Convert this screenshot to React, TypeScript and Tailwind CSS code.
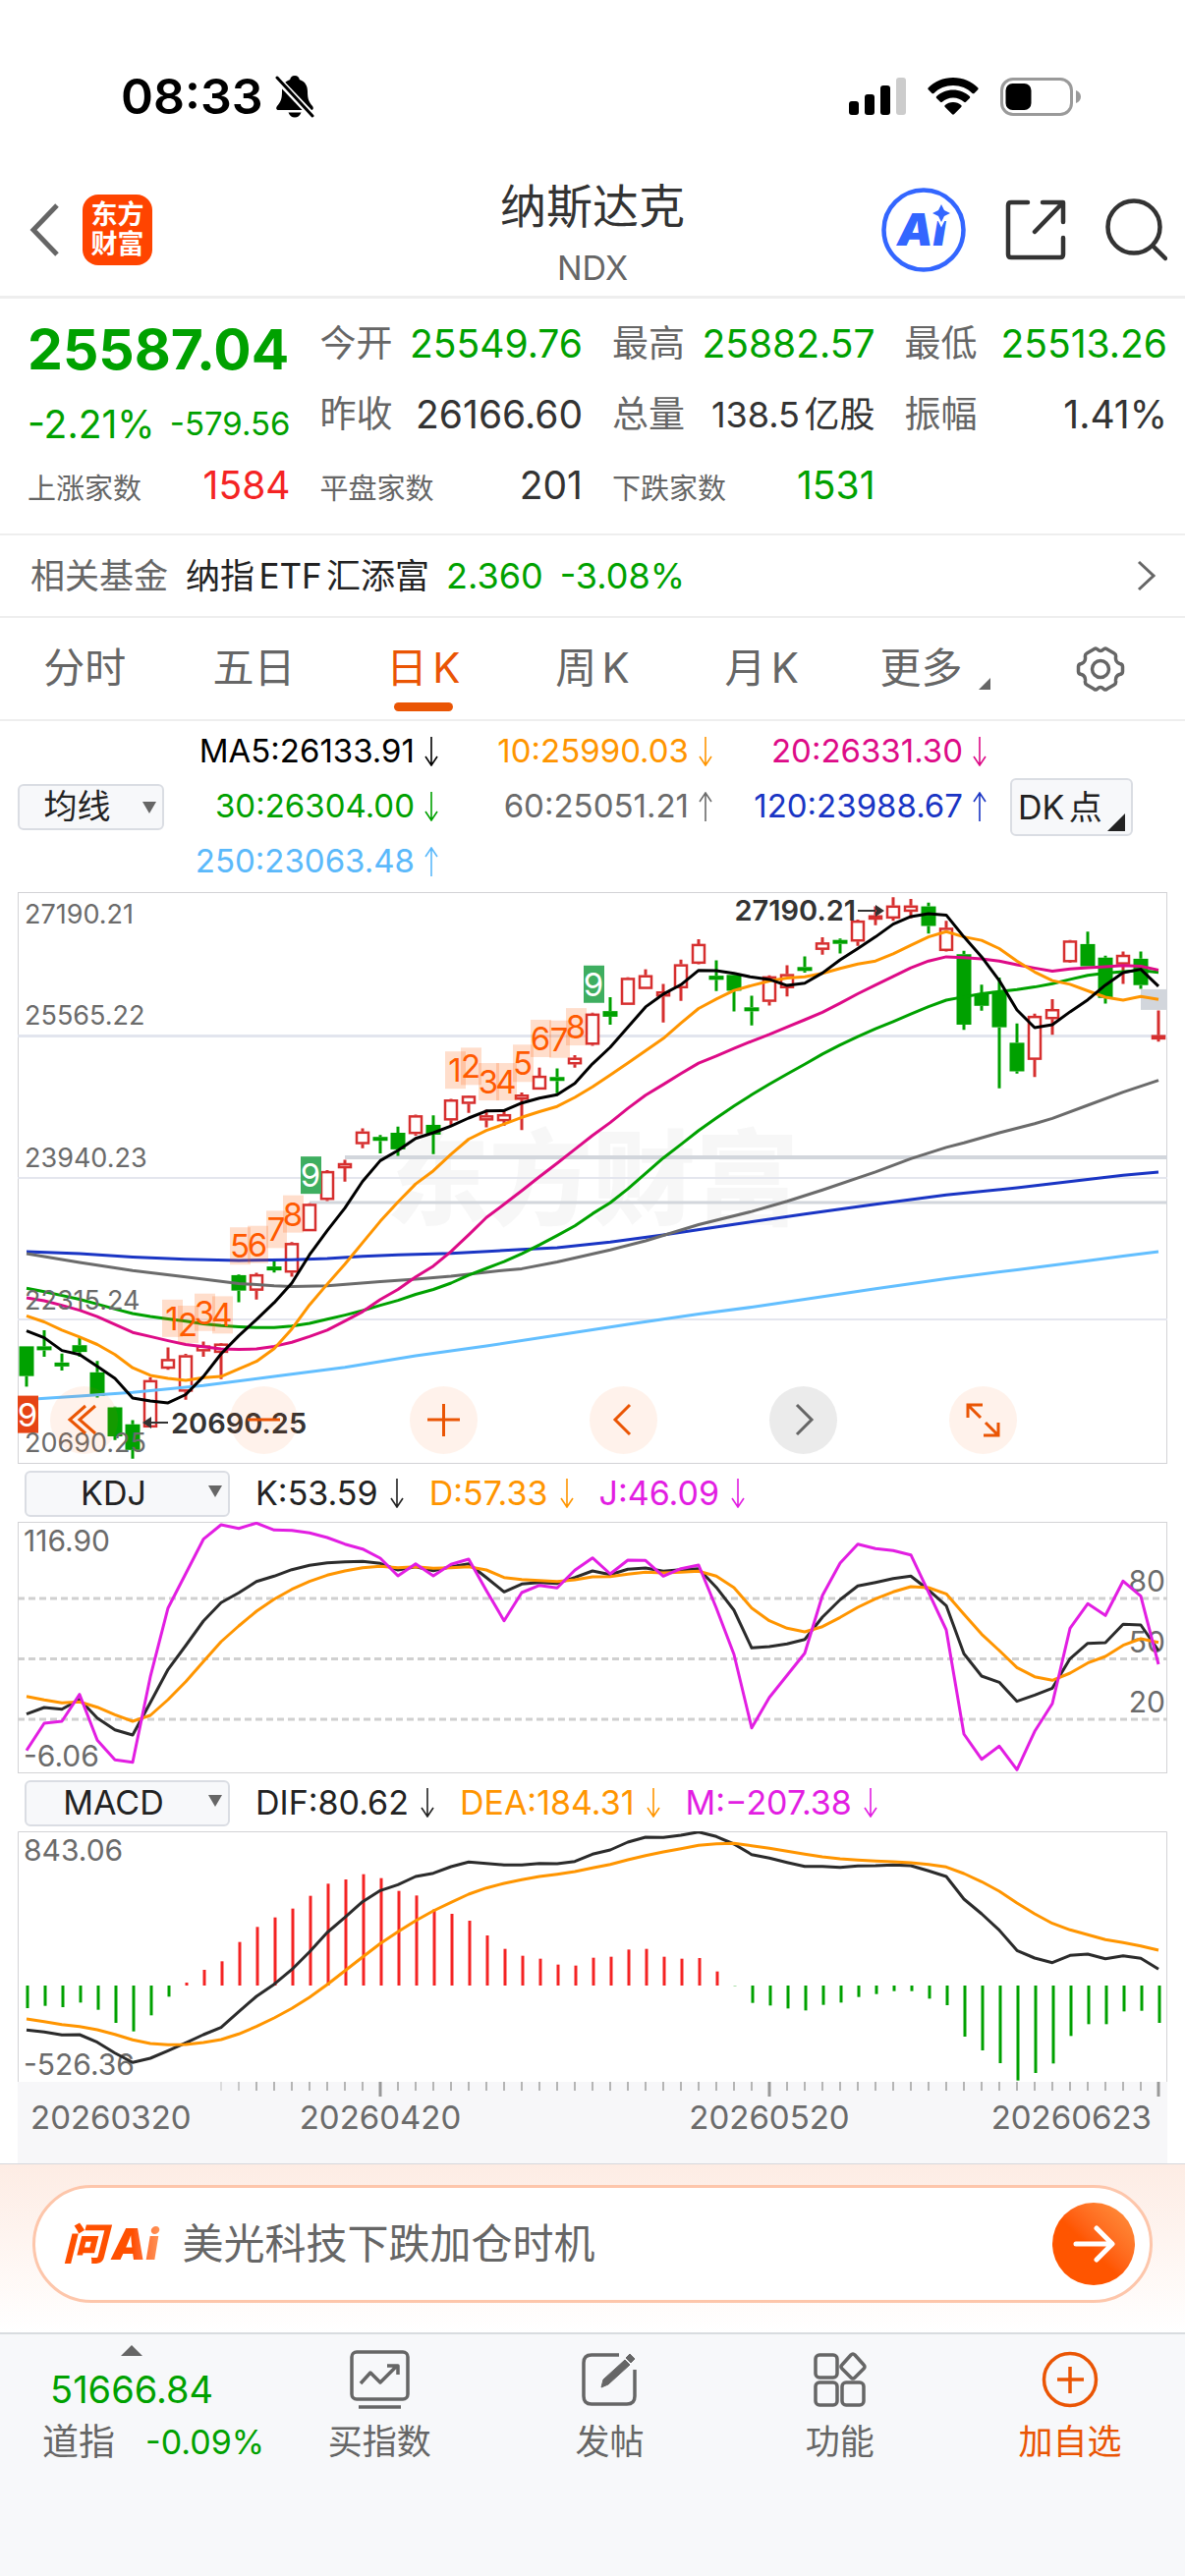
import { useState } from "react";
import type { ReactNode } from "react";

type Candle = ["u" | "d", number, number, number, number];
type Tone = "up" | "down" | "flat";

const TONES: Record<Tone, string> = {
  up: "text-[#f42323]",
  down: "text-[#00a100]",
  flat: "text-[#333333]",
};

const QUOTES: { label: string; value: string; tone: Tone; small?: boolean }[][] = [
  [
    { label: "今开", value: "25549.76", tone: "down" },
    { label: "最高", value: "25882.57", tone: "down" },
    { label: "最低", value: "25513.26", tone: "down" },
  ],
  [
    { label: "昨收", value: "26166.60", tone: "flat" },
    { label: "总量", value: "138.5亿股", tone: "flat", small: true },
    { label: "振幅", value: "1.41%", tone: "flat" },
  ],
];

const BREADTH: { label: string; value: string; tone: Tone }[] = [
  { label: "上涨家数", value: "1584", tone: "up" },
  { label: "平盘家数", value: "201", tone: "flat" },
  { label: "下跌家数", value: "1531", tone: "down" },
];

const TABS = ["分时", "五日", "日K", "周K", "月K"];

const AVERAGES = [
  { text: "MA5:26133.91", dir: "down", color: "text-black" },
  { text: "10:25990.03", dir: "down", color: "text-[#ff9500]" },
  { text: "20:26331.30", dir: "down", color: "text-[#dd0b87]" },
  { text: "30:26304.00", dir: "down", color: "text-[#00a100]" },
  { text: "60:25051.21", dir: "up", color: "text-[#6b6b6b]" },
  { text: "120:23988.67", dir: "up", color: "text-[#1a35c4]" },
  { text: "250:23063.48", dir: "up", color: "text-[#5bb9fb]" },
];

// Candle: direction, high, body top, body bottom, low. All levels count
// down from the price ceiling (22 = top edge of the chart, 1540 = bottom).
const CANDLES: Candle[] = [
  ["d", 1228, 1228, 1307, 1335], ["d", 1185, 1228, 1238, 1256], ["d", 1247, 1271, 1281, 1292],
  ["d", 1205, 1225, 1243, 1256], ["d", 1267, 1297, 1360, 1364], ["d", 1388, 1390, 1467, 1477],
  ["d", 1424, 1435, 1503, 1526], ["u", 1310, 1318, 1443, 1443], ["u", 1231, 1262, 1287, 1290],
  ["u", 1248, 1252, 1348, 1370], ["u", 1215, 1226, 1241, 1256], ["u", 1219, 1221, 1245, 1315],
  ["d", 1037, 1039, 1080, 1111], ["u", 1033, 1037, 1080, 1104], ["d", 996, 1016, 1026, 1032],
  ["u", 951, 954, 1032, 1043], ["u", 848, 850, 922, 922], ["u", 760, 763, 839, 842],
  ["u", 733, 742, 755, 791], ["u", 649, 658, 691, 702], ["d", 667, 672, 680, 716],
  ["d", 645, 661, 705, 722], ["u", 613, 615, 664, 669], ["d", 615, 640, 666, 718],
  ["u", 571, 573, 628, 640], ["u", 562, 563, 584, 608], ["u", 600, 615, 628, 647],
  ["u", 600, 612, 630, 643], ["u", 554, 560, 573, 654], ["u", 488, 510, 546, 546],
  ["d", 490, 513, 522, 556], ["u", 455, 462, 479, 488], ["u", 342, 345, 427, 430],
  ["d", 301, 338, 353, 374], ["u", 248, 250, 321, 321], ["u", 227, 243, 279, 279],
  ["u", 266, 286, 299, 368], ["u", 201, 214, 277, 311], ["u", 147, 160, 212, 214],
  ["d", 203, 244, 255, 285], ["d", 240, 242, 284, 339], ["d", 297, 328, 337, 376],
  ["u", 243, 246, 313, 323], ["u", 216, 240, 277, 299], ["d", 193, 221, 230, 236],
  ["u", 142, 156, 175, 188], ["d", 145, 149, 158, 185], ["u", 95, 98, 153, 165],
  ["u", 60, 84, 95, 110], ["u", 36, 58, 92, 98], ["u", 40, 58, 74, 92],
  ["d", 50, 60, 112, 132], ["u", 98, 117, 178, 180], ["d", 178, 187, 374, 388],
  ["d", 268, 293, 324, 337], ["d", 249, 285, 381, 543], ["d", 371, 422, 498, 504],
  ["u", 345, 351, 467, 513], ["u", 306, 333, 359, 401], ["u", 149, 151, 208, 210],
  ["d", 127, 160, 219, 219], ["d", 191, 196, 303, 318], ["u", 180, 189, 214, 266],
  ["d", 180, 199, 269, 279], ["u", 336, 402, 413, 419],
];

const MA5 = [
  1187, 1205, 1239, 1250, 1281, 1313, 1365, 1373, 1378, 1356, 1308, 1248, 1200, 1157, 1112, 1060, 985, 921, 861, 790,
  735, 708, 676, 661, 643, 622, 603, 602, 582, 569, 560, 530, 478, 434, 381, 327, 293, 268, 230, 231, 238, 248, 254,
  270, 264, 237, 202, 172, 141, 107, 87, 79, 83, 141, 194, 257, 335, 382, 374, 340, 308, 269, 236, 227, 272,
];
const MA10 = [
  1147, 1163, 1185, 1203, 1223, 1250, 1285, 1305, 1313, 1318, 1311, 1308, 1288, 1268, 1234, 1182, 1118, 1063, 1010,
  953, 896, 845, 797, 762, 718, 678, 655, 638, 620, 605, 591, 567, 539, 508, 476, 443, 411, 370, 331, 306, 283, 270,
  258, 250, 247, 238, 225, 213, 205, 186, 163, 141, 127, 141, 150, 172, 205, 234, 257, 267, 284, 301, 309, 299, 307,
];
const MA20 = [
  1099, 1107, 1119, 1132, 1149, 1170, 1191, 1202, 1213, 1223, 1229, 1235, 1236, 1235, 1228, 1217, 1202, 1185, 1161,
  1136, 1104, 1077, 1044, 1015, 976, 932, 886, 851, 815, 778, 742, 705, 668, 634, 596, 561, 533, 504, 476, 457, 437,
  418, 400, 380, 361, 341, 317, 292, 269, 246, 223, 205, 194, 196, 199, 205, 215, 224, 232, 226, 223, 220, 217, 219, 229,
];
const MA30 = [
  1074, 1083, 1093, 1103, 1116, 1129, 1141, 1149, 1155, 1161, 1168, 1173, 1176, 1178, 1178, 1174, 1167, 1156, 1145,
  1133, 1119, 1106, 1090, 1077, 1060, 1039, 1021, 1003, 982, 959, 934, 908, 876, 847, 810, 769, 728, 692, 655, 622,
  590, 560, 532, 505, 479, 452, 428, 406, 385, 366, 346, 326, 309, 300, 292, 286, 281, 274, 265, 254, 243, 237, 233,
  230, 235,
];
// The slow averages only need a point every few days.
const MA60: [number, number][] = [
  [0, 982], [3, 1005], [6, 1027], [9, 1044], [12, 1061], [14, 1067], [15, 1069], [17, 1067], [20, 1056], [22, 1050],
  [24, 1042], [27, 1026], [28, 1022], [30, 1004], [33, 972], [35, 948], [38, 905], [41, 870], [43, 843], [45, 813],
  [48, 765], [50, 730], [52, 700], [53, 688], [55, 661], [57, 637], [58, 623], [60, 588], [62, 553], [64, 522],
];
const MA120: [number, number][] = [
  [0, 977], [3, 982], [6, 991], [9, 997], [12, 1000], [15, 998], [17, 995], [19, 989], [21, 985], [24, 981], [28, 971],
  [30, 966], [33, 951], [36, 932], [40, 904], [44, 877], [48, 851], [52, 826], [56, 807], [60, 785], [62, 774], [64, 765],
];
const MA250: [number, number][] = [
  [0, 1369], [3, 1360], [6, 1350], [10, 1332], [14, 1308], [18, 1284], [22, 1253], [26, 1227], [30, 1198], [34, 1170],
  [38, 1142], [41, 1124], [44, 1103], [48, 1075], [52, 1048], [56, 1025], [60, 1001], [62, 988], [64, 977],
];

// TD sequential counts: left edge and level of the box top
const COUNTS: [string, number, number][] = [
  ["1", 147, 1104], ["2", 163, 1120], ["3", 180, 1088], ["4", 198, 1095], ["5", 216, 912], ["6", 234, 908],
  ["7", 253, 868], ["8", 270, 827], ["9", 288, 724],
  ["1", 435, 445], ["2", 451, 435], ["3", 469, 476], ["4", 487, 476], ["5", 504, 427], ["6", 522, 361],
  ["7", 541, 363], ["8", 558, 330], ["9", 576, 217],
];

const PRICE_LABELS: [string, number][] = [
  ["27190.21", 32], ["25565.22", 135], ["23940.23", 280], ["22315.24", 425], ["20690.25", 570],
];

const KDJ_K = [
  762, 742, 747, 717, 774, 810, 826, 727, 626, 553, 478, 422, 392, 357, 341, 321, 308, 300, 297, 296, 302, 322, 312,
  324, 312, 303, 345, 389, 365, 360, 363, 345, 325, 336, 320, 316, 326, 321, 318, 375, 445, 560, 556, 548, 534, 466,
  413, 371, 360, 348, 341, 383, 431, 578, 646, 665, 723, 704, 683, 593, 546, 544, 488, 490, 568,
];
const KDJ_D = [
  708, 719, 728, 725, 741, 764, 784, 766, 718, 663, 602, 541, 493, 448, 411, 381, 357, 338, 325, 315, 311, 315, 312,
  317, 315, 312, 322, 345, 351, 354, 357, 352, 343, 342, 335, 329, 331, 329, 326, 341, 376, 438, 477, 500, 511, 495,
  467, 436, 410, 389, 373, 376, 395, 457, 518, 568, 620, 648, 659, 637, 606, 586, 552, 532, 543,
];
const KDJ_J = [
  873, 790, 784, 702, 842, 902, 909, 648, 438, 333, 228, 184, 195, 179, 200, 201, 209, 223, 243, 258, 286, 340, 303,
  340, 305, 289, 385, 477, 391, 369, 377, 323, 285, 334, 292, 293, 341, 318, 307, 438, 580, 804, 711, 644, 576, 400,
  301, 243, 257, 263, 276, 390, 505, 823, 900, 860, 932, 815, 730, 500, 425, 461, 356, 402, 610,
];

const MACD_BARS = [
  700, 693, 697, 683, 705, 745, 771, 722, 665, 622, 583, 557, 498, 452, 423, 396, 357, 320, 307, 291, 303, 342, 356,
  398, 412, 433, 478, 519, 540, 549, 567, 570, 546, 543, 521, 519, 543, 549, 547, 588, 632, 684, 692, 701, 707, 690,
  683, 666, 657, 648, 648, 671, 691, 787, 829, 868, 921, 898, 869, 785, 749, 749, 710, 708, 745,
];
const MACD_DIF = [
  767, 773, 782, 781, 804, 837, 866, 853, 830, 806, 781, 759, 711, 664, 627, 582, 528, 469, 423, 375, 341, 323, 298,
  288, 268, 254, 258, 263, 263, 258, 259, 252, 230, 217, 193, 178, 179, 172, 162, 176, 199, 231, 242, 255, 267, 267,
  270, 266, 265, 263, 265, 281, 298, 367, 412, 462, 524, 547, 561, 539, 535, 549, 540, 548, 581,
];
const MACD_DEA = [
  733, 741, 750, 756, 766, 780, 797, 808, 812, 811, 805, 796, 779, 756, 730, 701, 667, 628, 586, 544, 503, 467, 433,
  403, 377, 352, 333, 319, 308, 298, 291, 283, 272, 261, 247, 234, 223, 213, 203, 198, 197, 204, 212, 221, 230, 238,
  244, 248, 251, 253, 256, 261, 269, 289, 314, 343, 379, 412, 441, 461, 476, 491, 500, 510, 523,
];
const MACD_ZERO = 631;

const dayX = (i: number) => 9 + 18 * i;
const priceY = (v: number) => ((v - 22) * 582) / 1518;
const kdjY = (v: number) => (v - 175) / 3;
const macdY = (v: number) => (v - 160) / 3;

const toPoints = (data: (number | [number, number])[], scale: (v: number) => number) =>
  data
    .map((d, i) => (Array.isArray(d) ? `${dayX(d[0])},${scale(d[1]).toFixed(1)}` : `${dayX(i)},${scale(d).toFixed(1)}`))
    .join(" ");

function Line({ points, color }: { points: string; color: string }) {
  return <polyline points={points} fill="none" stroke={color} strokeWidth="3" strokeLinejoin="round" />;
}

function Trend({ dir }: { dir: string }) {
  return (
    <svg viewBox="0 0 14 30" className="w-[14px] h-[30px] shrink-0" fill="none" stroke="currentColor" strokeWidth="1.6">
      {dir === "up" ? <path d="M7 30V1M1 10L7 1l6 9" /> : <path d="M7 0v29M1 20l6 9 6-9" />}
    </svg>
  );
}

function Picker({ label, options, className }: { label: string; options: string[]; className: string }) {
  return (
    <div className={`relative shrink-0 ${className}`}>
      <select
        aria-label={label}
        className="appearance-none w-full h-[47px] pr-7 rounded-md border-2 border-[#dadde3] bg-[#f7f8fa] text-[34px] leading-10 text-[#222222] [text-align-last:center]"
      >
        {options.map((o) => (
          <option key={o}>{o}</option>
        ))}
      </select>
      <svg viewBox="0 0 14 12" className="absolute right-2 top-[18px] w-[14px] h-3 pointer-events-none" fill="#666666">
        <path d="M0 0h14L7 12z" />
      </svg>
    </div>
  );
}

function StatusBar() {
  return (
    <div className="flex items-center justify-between pt-[65px] pl-[123px] pr-[106px]">
      <div className="flex items-center gap-3">
        <span className="text-[50px] leading-[66px] font-semibold text-black">08:33</span>
        <svg viewBox="0 0 40 44" className="w-10 h-11">
          <path d="M20 1c-3 0-4.500 2-4.800 4C9 7 7 12 7 17c0 8-1.500 11-5 15-1.500 2-.8 4 1.500 4h33c2.300 0 3-2 1.500-4-3.500-4-5-7-5-15 0-5-2-10-8.200-12C24.500 3 23 1 20 1zM13.500 38.500c1 3 3.500 5 6.500 5s5.500-2 6.500-5z" />
          <path d="M0 2l38 40" stroke="white" strokeWidth="7" />
          <path d="M2 3l36 39" stroke="black" strokeWidth="3" strokeLinecap="round" />
        </svg>
      </div>
      <div className="flex items-center gap-[22px]">
        <svg viewBox="0 0 58 38" className="w-[58px] h-[38px]">
          <rect x="0" y="24" width="10" height="14" rx="3" />
          <rect x="16" y="17" width="10" height="21" rx="3" />
          <rect x="32" y="8" width="10" height="30" rx="3" />
          <rect x="48" y="0" width="10" height="38" rx="3" fill="#cccccc" />
        </svg>
        <svg viewBox="0 0 52 38" className="w-[52px] h-[38px]">
          <path d="M26 0C16 0 7 4 .8 10.200c-.6.600-.6 1.400 0 2l3.700 3.700c.5.500 1.300.5 1.900 0C11.500 11 18.500 8 26 8s14.500 3 19.600 7.900c.6.500 1.400.5 1.900 0l3.700-3.700c.6-.6.6-1.400 0-2C45 4 36 0 26 0z" />
          <path d="M26 12.500c-6.500 0-12.400 2.500-16.800 6.500-.6.600-.6 1.400 0 2l3.800 3.700c.5.600 1.300.6 1.900.1 3-2.700 6.800-4.300 11.100-4.300s8.100 1.600 11.100 4.300c.6.500 1.400.5 1.900-.1l3.800-3.700c.6-.6.6-1.400 0-2-4.400-4-10.300-6.500-16.800-6.500z" />
          <path d="M26 25c-3.200 0-6 1.100-8.200 3-.6.500-.6 1.400 0 2l7.200 7.300c.6.600 1.400.6 2 0l7.200-7.300c.6-.6.6-1.500 0-2-2.200-1.900-5-3-8.200-3z" />
        </svg>
        <svg viewBox="0 0 82 39" className="w-[82px] h-[39px]">
          <rect x="1.500" y="1.500" width="71" height="36" rx="11.500" fill="none" stroke="#9a9a9a" strokeWidth="3" />
          <path d="M77 13c3 1 5 3.500 5 6.500S80 25 77 26z" fill="#9a9a9a" />
          <rect x="5.500" y="6" width="26" height="27" rx="7" />
        </svg>
      </div>
    </div>
  );
}

function Header() {
  return (
    <header className="grid grid-cols-[1fr_auto_1fr] items-center pt-[44px] pb-1 px-[18px] border-b-[3px] border-[#eeeeee]">
      <div className="flex items-center gap-6 pl-3 pb-1">
        <button aria-label="返回">
          <svg viewBox="0 0 30 54" className="w-[30px] h-[54px]" fill="none" stroke="#666666" strokeWidth="5">
            <path d="M28 2L4 27l24 25" />
          </svg>
        </button>
        <button className="w-[71px] h-[72px] rounded-2xl bg-[#ff4400] text-white text-[27px] leading-[30px] font-bold text-center">
          东方
          <br />
          财富
        </button>
      </div>
      <div className="text-center">
        <h1 className="text-[47px] leading-[70px] text-[#333333]">纳斯达克</h1>
        <p className="mt-1 text-[34px] leading-[48px] text-[#666666]">NDX</p>
      </div>
      <div className="flex items-center justify-end gap-[39px] pb-1">
        <button aria-label="AI 助手">
          <svg viewBox="0 0 88 88" className="w-[88px] h-[88px]">
            <circle cx="44" cy="44" r="40.500" fill="none" stroke="#3366ff" strokeWidth="4.500" />
            <text x="17" y="60" fontSize="46" fontWeight="900" fontStyle="italic" fill="#3366ff">
              Ai
            </text>
            <path d="M62 18l3 6 6 3-6 3-3 6-3-6-6-3 6-3z" fill="#3366ff" stroke="white" strokeWidth="5" paintOrder="stroke" />
          </svg>
        </button>
        <button aria-label="分享">
          <svg viewBox="0 0 62 62" className="w-[62px] h-[62px]" fill="none" stroke="#333333" strokeWidth="4.500" strokeLinejoin="round" strokeLinecap="round">
            <path d="M23 3H6Q3 3 3 6v50q0 3 3 3h50q3 0 3-3V39M38 3h21v20M58 4L30 33" />
          </svg>
        </button>
        <button aria-label="搜索">
          <svg viewBox="0 0 64 64" className="w-16 h-16" fill="none" stroke="#333333" strokeWidth="4.500" strokeLinecap="round">
            <circle cx="30" cy="29" r="26.500" />
            <path d="M50 49l12 12" />
          </svg>
        </button>
      </div>
    </header>
  );
}

function QuotePanel() {
  return (
    <section className="grid grid-cols-4 gap-x-[30px] pt-[10px] pb-[13px] pl-7 pr-[18px] border-b-2 border-[#eeeeee] whitespace-nowrap">
      <div className="flex items-center h-[72px] pt-3 text-[57px] font-bold text-[#00a100]">25587.04</div>
      {QUOTES[0].map((q) => (
        <Quote key={q.label} {...q} />
      ))}
      <div className="flex items-center justify-between h-[72px] pt-5 text-[#00a100]">
        <span className="text-[39px]">-2.21%</span>
        <span className="text-[33px]">-579.56</span>
      </div>
      {QUOTES[1].map((q) => (
        <Quote key={q.label} {...q} />
      ))}
      {BREADTH.map((b) => (
        <div key={b.label} className="flex items-baseline justify-between h-[72px] leading-[72px]">
          <span className="text-[29px] text-[#666666]">{b.label}</span>
          <span className={`text-[39px] ${TONES[b.tone]}`}>{b.value}</span>
        </div>
      ))}
    </section>
  );
}

function Quote({ label, value, tone, small }: { label: string; value: string; tone: Tone; small?: boolean }) {
  return (
    <div className="flex items-center justify-between h-[72px]">
      <span className="text-[37px] text-[#666666]">{label}</span>
      <span className={`${small ? "text-[36px]" : "text-[39px]"} ${TONES[tone]}`}>{value}</span>
    </div>
  );
}

function FundRow() {
  return (
    <a href="#fund" className="flex items-center h-[84px] pl-[31px] pr-[29px] border-b-2 border-[#eeeeee] text-[35px] text-[#00a100]">
      <span className="text-[#666666]">相关基金</span>
      <span className="ml-[18px] text-[#222222]">纳指ETF汇添富</span>
      <span className="ml-[17px] text-[36px]">2.360</span>
      <span className="ml-[17px] text-[36px]">-3.08%</span>
      <svg viewBox="0 0 20 32" className="w-5 h-8 ml-auto" fill="none" stroke="#666666" strokeWidth="3">
        <path d="M2 2l15 14L2 30" />
      </svg>
    </a>
  );
}

function PeriodTabs() {
  const [active, setActive] = useState("日K");

  return (
    <nav className="grid grid-cols-7 h-[105px] border-b-2 border-[#eeeeee] text-[42px] text-[#666666]">
      {TABS.map((tab) => (
        <button key={tab} onClick={() => setActive(tab)} className={`relative pb-0.5 ${tab === active ? "text-[#ea5504]" : ""}`}>
          {tab}
          {tab === active && <span className="absolute bottom-2 inset-x-[56px] h-[9px] rounded-full bg-[#ea5504]" />}
        </button>
      ))}
      <button className="flex items-center justify-center gap-4 pb-0.5 pl-2">
        更多
        <svg viewBox="0 0 12 12" className="w-3 h-3 mt-8" fill="#666666">
          <path d="M12 0v12H0z" />
        </svg>
      </button>
      <button aria-label="设置" className="flex items-center justify-center">
        <svg viewBox="0 0 50 48" className="w-[50px] h-12" fill="none" stroke="#666666" strokeWidth="3.500" strokeLinejoin="round">
          <path d="M18 4q2-2 4 0 3 3 6 0 2-2 4 0l7 4q2 1 1.500 4-.5 5 4 6.500 3 .5 3 3v5q0 2.500-3 3-4.500 1.500-4 6.500.500 3-1.500 4l-7 4q-2 2-4 0-3-3-6 0-2 2-4 0l-7-4q-2-1-1.500-4 .5-5-4-6.500-3-.5-3-3v-5q0-2.500 3-3 4.500-1.500 4-6.500Q9 9 11 8z" />
          <circle cx="25" cy="24" r="8.500" />
        </svg>
      </button>
    </nav>
  );
}

function AverageLegend() {
  return (
    <div className="flex items-center px-[18px] py-[3px]">
      <Picker label="主图指标" options={["均线", "BOLL"]} className="w-[149px]" />
      <div className="flex-1 grid grid-cols-3">
        {AVERAGES.map((a) => (
          <div key={a.text} className={`flex items-center justify-end gap-[10px] h-14 text-[33px] ${a.color}`}>
            {a.text}
            <Trend dir={a.dir} />
          </div>
        ))}
      </div>
      <button className="relative w-[125px] h-[59px] ml-6 mr-[35px] pl-[6px] rounded-md border-2 border-[#dadde3] bg-[#f7f8fa] text-[34px] text-left text-[#222222]">
        DK点
        <svg viewBox="0 0 18 18" className="absolute right-[6px] bottom-[3px] w-[18px] h-[18px]" fill="#222222">
          <path d="M18 0v18H0z" />
        </svg>
      </button>
    </div>
  );
}

function PriceChart() {
  return (
    <svg viewBox="0 0 1170 582" className="block w-full">
      <rect x="0.500" y="0.500" width="1169" height="581" fill="none" stroke="#d3d3d6" />
      <text x="375" y="330" fontSize="105" fontWeight="900" fill="#f7f7f7">
        东方财富
      </text>
      <path d="M0 146.500h1170" stroke="#e2e5ee" strokeWidth="3" />
      <path d="M0 291h1170M0 435h1170" stroke="#e4e6ee" strokeWidth="2" />
      <path d="M333 270h837" stroke="#d2d6dc" strokeWidth="4" />
      <path d="M297 316h873" stroke="#d2d6dc" strokeWidth="3" />
      <rect x="1143" y={priceY(280)} width="27" height="21" fill="#d2d6dc" />

      {CANDLES.map(([dir, high, top, bottom, low], i) => {
        const color = dir === "u" ? "#d62f2f" : "#00a100";
        const x = dayX(i);
        const y = priceY(top);
        const h = Math.max(priceY(bottom) - y, 4);
        return (
          <g key={i} stroke={color} strokeWidth="3">
            <path d={`M${x} ${priceY(high)}V${y}M${x} ${y + h}V${priceY(low)}`} />
            {dir === "u" ? (
              <rect x={x - 6} y={y + 1} width="12" height={Math.max(h - 2, 2)} fill="white" strokeWidth="2.500" />
            ) : (
              <rect x={x - 7.5} y={y} width="15" height={h} fill={color} stroke="none" />
            )}
          </g>
        );
      })}

      <Line points={toPoints(MA250, priceY)} color="#63bfff" />
      <Line points={toPoints(MA120, priceY)} color="#1a35c4" />
      <Line points={toPoints(MA60, priceY)} color="#6b6b6b" />
      <Line points={toPoints(MA30, priceY)} color="#00a100" />
      <Line points={toPoints(MA20, priceY)} color="#dd0b87" />
      <Line points={toPoints(MA10, priceY)} color="#ff9500" />
      <Line points={toPoints(MA5, priceY)} color="#000000" />

      {COUNTS.map(([n, x, level], i) => (
        <g key={i}>
          <rect
            x={x}
            y={priceY(level)}
            width="21"
            height="38"
            fill={n === "9" ? "#3eae60" : "#ff5a00"}
            fillOpacity={n === "9" ? 1 : 0.2}
          />
          <text x={x + 10} y={priceY(level) + 31} fontSize="33" textAnchor="middle" fill={n === "9" ? "#ffffff" : "#ff5a00"}>
            {n}
          </text>
        </g>
      ))}
      <rect x="0" y={priceY(1359)} width="21" height="38" fill="#e64415" />
      <text x="10" y={priceY(1359) + 31} fontSize="33" textAnchor="middle" fill="white">
        9
      </text>

      <g fontSize="27" fill="#6b6b6b">
        {PRICE_LABELS.map(([label, y]) => (
          <text key={label} x="7" y={y}>
            {label}
          </text>
        ))}
      </g>
      <g fontSize="29" fontWeight="600" fill="#333333">
        <text x="156" y="551">20690.25</text>
        <text x="853" y="29" textAnchor="end">
          27190.21
        </text>
        <path d="M127 540l9-6v12zM134 539h19v2h-19z" />
        <path d="M882 19l-9-6v12zM855 18h19v2h-19z" />
      </g>
    </svg>
  );
}

const TOOLS: { label: string; path: string; muted?: boolean }[] = [
  { label: "快退", path: "M36 20L20 34l16 14M46 20L30 34l16 14" },
  { label: "缩小", path: "M18 34h33" },
  { label: "放大", path: "M18 34h33M34.500 18v33" },
  { label: "左移", path: "M41 19L26 34l15 15" },
  { label: "右移", path: "M28 19l15 15-15 15", muted: true },
  { label: "全屏", path: "M19 32V19h15M19 19l13 13M50 37v13H35M50 50L37 37" },
];

function ChartTools() {
  return (
    <div className="absolute bottom-[10px] left-[33px] flex gap-[114px]">
      {TOOLS.map((tool) => (
        <button
          key={tool.label}
          aria-label={tool.label}
          className={`size-[69px] rounded-full ${tool.muted ? "bg-[#ebebeb] text-[#666666]" : "bg-[#ff5a00]/8 text-[#ea5504]"}`}
        >
          <svg viewBox="0 0 69 69" fill="none" stroke="currentColor" strokeWidth="3">
            <path d={tool.path} />
          </svg>
        </button>
      ))}
    </div>
  );
}

function IndicatorBar({ picker, children }: { picker: ReactNode; children: ReactNode }) {
  return (
    <div className="flex items-center gap-[26px] h-[59px] pl-[7px] text-[34px] text-[#222222]">
      {picker}
      <div className="flex gap-[26px]">{children}</div>
    </div>
  );
}

function Reading({ text, color }: { text: string; color: string }) {
  return (
    <span className={`flex items-center gap-3 ${color}`}>
      {text}
      <Trend dir="down" />
    </span>
  );
}

function KdjChart() {
  return (
    <svg viewBox="0 0 1170 256" className="block w-full">
      <rect x="0.500" y="0.500" width="1169" height="255" fill="none" stroke="#d3d3d6" />
      <path d="M0 78h1170M0 139.500h1170M0 201h1170" stroke="#d0d0d0" strokeWidth="3" strokeDasharray="7 4" />
      <g fontSize="30" fill="#6b6b6b">
        <text x="6" y="30">116.90</text>
        <text x="6" y="249">-6.06</text>
        <text x="1168" y="71" textAnchor="end">80</text>
        <text x="1168" y="133" textAnchor="end">50</text>
        <text x="1168" y="194" textAnchor="end">20</text>
      </g>
      <Line points={toPoints(KDJ_K, kdjY)} color="#2b2b2b" />
      <Line points={toPoints(KDJ_D, kdjY)} color="#ff9500" />
      <Line points={toPoints(KDJ_J, kdjY)} color="#e21ee2" />
    </svg>
  );
}

function MacdChart() {
  const zero = macdY(MACD_ZERO);

  return (
    <svg viewBox="0 0 1170 338" className="block w-full">
      <path d="M0.500 255V0.500h1169V255" fill="none" stroke="#d3d3d6" />
      {MACD_BARS.map((v, i) => (
        <path
          key={i}
          d={`M${dayX(i) + 1} ${zero}V${macdY(v)}`}
          stroke={v < MACD_ZERO ? "#f42323" : "#00a100"}
          strokeWidth="3"
        />
      ))}
      <g fontSize="30" fill="#6b6b6b">
        <text x="6" y="30">843.06</text>
        <text x="6" y="248">-526.36</text>
      </g>
      <Line points={toPoints(MACD_DIF, macdY)} color="#2b2b2b" />
      <Line points={toPoints(MACD_DEA, macdY)} color="#ff9500" />

      <rect x="0" y="255" width="1170" height="83" fill="#f7f7f9" />
      {MACD_BARS.map((_, i) => {
        if (i < 11) return null;
        const major = i === 20 || i === 42 || i === 64;
        return (
          <path
            key={i}
            d={`M${dayX(i)} 255v${major ? 15 : 9}`}
            stroke={major ? "#999999" : "#b5b5b5"}
            strokeWidth={major ? 3 : 2}
            opacity={i === 11 ? 0.4 : i === 12 ? 0.7 : 1}
          />
        );
      })}
      <g fontSize="33" fill="#6b6b6b">
        <text x="13" y="303">20260320</text>
        <text x="369" y="303" textAnchor="middle">20260420</text>
        <text x="765" y="303" textAnchor="middle">20260520</text>
        <text x="1154" y="303" textAnchor="end">20260623</text>
      </g>
    </svg>
  );
}

function AskBar() {
  return (
    <div className="px-[33px] pt-[21px] pb-[30px] border-t border-b-2 border-t-[#d5d8dc] border-b-[#d8dcdf] bg-linear-to-b from-[#fdece4] to-white">
      <div className="flex items-center h-[120px] pl-7 pr-[15px] rounded-full border-[3px] border-[#fdc6ab] bg-white">
        <span className="pr-1 text-[44px] leading-[60px] font-black italic text-transparent bg-clip-text bg-linear-to-r from-[#ff5000] from-70% to-[#ff9a5c]">
          问Ai
        </span>
        <input
          aria-label="问AI"
          placeholder="美光科技下跌加仓时机"
          className="flex-1 min-w-0 ml-5 text-[42px] leading-[60px] placeholder:text-[#666666] outline-none"
        />
        <button aria-label="发送" className="size-[84px] rounded-full bg-linear-to-tr from-[#ff5500] from-45% to-[#ff9440]">
          <svg viewBox="0 0 84 84" fill="none" stroke="white" strokeWidth="5" strokeLinecap="round" strokeLinejoin="round">
            <path d="M24 42h36M45 26l16 16-16 16" />
          </svg>
        </button>
      </div>
    </div>
  );
}

const ACTIONS: { label: string; icon: ReactNode; accent?: boolean }[] = [
  {
    label: "买指数",
    icon: (
      <>
        <rect x="2" y="2" width="57" height="48" rx="5" />
        <path d="M11 34l10-11 10 10 17-17M38 16h11v9M9 58h43" />
      </>
    ),
  },
  {
    label: "发帖",
    icon: (
      <>
        <path d="M40 5H12Q4 5 4 13v34q0 8 8 8h36q8 0 8-8V20" />
        <path d="M22 38l2-8L46 10l5 5-22 20z" fill="currentColor" strokeWidth="1" />
        <path d="M51 4l5 5-4 4-5-5z" fill="currentColor" strokeWidth="1" />
      </>
    ),
  },
  {
    label: "功能",
    icon: (
      <>
        <rect x="5" y="5" width="22" height="23" rx="4" />
        <rect x="5" y="33" width="22" height="23" rx="4" />
        <rect x="32" y="33" width="22" height="23" rx="4" />
        <path d="M41 5q2-2 4 0l9 10q2 2 0 4l-9 9q-2 2-4 0l-9-9q-2-2 0-4z" />
      </>
    ),
  },
  {
    label: "加自选",
    accent: true,
    icon: (
      <>
        <circle cx="30" cy="30" r="26.500" />
        <path d="M17 30h27M30 17v27" />
      </>
    ),
  },
];

function BottomBar() {
  return (
    <footer className="grow grid grid-cols-5 content-start pl-[35px] bg-[#f7f8fa] text-[35px] text-[#666666]">
      <button className="flex flex-col items-center pt-[11px]">
        <svg viewBox="0 0 22 11" className="w-[22px] h-[11px] mr-9" fill="#666666">
          <path d="M11 0l11 11H0z" />
        </svg>
        <span className="mt-[9px] mr-9 text-[38px] leading-[50px] text-[#00a100]">51666.84</span>
        <span className="flex gap-[31px] pl-2 mt-1 leading-[50px]">
          <span className="text-[37px]">道指</span>
          <span className="text-[34px] text-[#00a100]">-0.09%</span>
        </span>
      </button>
      {ACTIONS.map((a) => (
        <button key={a.label} className={`flex flex-col items-center pt-4 ${a.accent ? "text-[#ea5504]" : ""}`}>
          <svg viewBox="0 0 60 60" className="size-[60px] overflow-visible" fill="none" stroke="currentColor" strokeWidth="3.500" strokeLinejoin="round">
            {a.icon}
          </svg>
          <span className="mt-2 leading-[50px]">{a.label}</span>
        </button>
      ))}
    </footer>
  );
}

export default function App() {
  return (
    <div className="flex flex-col min-h-screen bg-white font-[Inter,'Noto_Sans_CJK_SC',sans-serif] [text-autospace:normal]">
      <StatusBar />
      <Header />
      <QuotePanel />
      <FundRow />
      <PeriodTabs />
      <AverageLegend />
      <main className="px-[18px]">
        <div className="relative">
          <PriceChart />
          <ChartTools />
        </div>
        <IndicatorBar picker={<Picker label="副图指标一" options={["KDJ", "RSI"]} className="w-[209px]" />}>
          <Reading text="K:53.59" color="text-[#222222]" />
          <Reading text="D:57.33" color="text-[#ff9500]" />
          <Reading text="J:46.09" color="text-[#e21ee2]" />
        </IndicatorBar>
        <KdjChart />
        <IndicatorBar picker={<Picker label="副图指标二" options={["MACD", "VOL"]} className="w-[209px]" />}>
          <Reading text="DIF:80.62" color="text-[#222222]" />
          <Reading text="DEA:184.31" color="text-[#ff9500]" />
          <Reading text="M:−207.38" color="text-[#e21ee2]" />
        </IndicatorBar>
        <MacdChart />
      </main>
      <AskBar />
      <BottomBar />
    </div>
  );
}
